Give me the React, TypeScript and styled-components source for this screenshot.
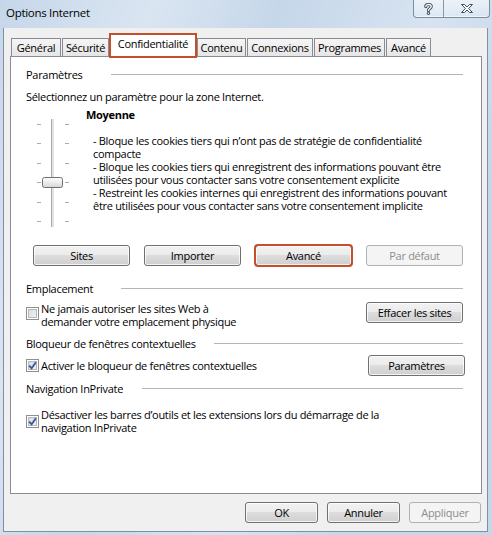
import React from 'react';
import styled, { createGlobalStyle } from 'styled-components';

const ORANGE = '#c4502b';

const GlobalStyle = createGlobalStyle`
  html, body {
    margin: 0;
    padding: 0;
  }
  body {
    font-family: "Open Sans", "Noto Sans", sans-serif;
    font-size: 11px;
    letter-spacing: -0.3px;
    color: #000;
  }
`;

const tabs = [
  { label: 'Général', w: 50 },
  { label: 'Sécurité', w: 47 },
  { label: 'Confidentialité', w: 88, active: true },
  { label: 'Contenu', w: 49 },
  { label: 'Connexions', w: 66 },
  { label: 'Programmes', w: 71 },
  { label: 'Avancé', w: 45 },
];

const HelpIcon = () => (
  <svg width="9" height="12" viewBox="0 0 9 12">
    <path d="M1.8 3.6 C1.8 0.8 7.2 0.8 7.2 3.6 C7.2 5.6 4.5 5.4 4.5 7.6" fill="none" stroke="#3d4b60" strokeWidth="3.2" strokeLinecap="round" />
    <circle cx="4.5" cy="10.3" r="1.6" fill="#3d4b60" />
    <path d="M1.8 3.6 C1.8 0.8 7.2 0.8 7.2 3.6 C7.2 5.6 4.5 5.4 4.5 7.6" fill="none" stroke="#fff" strokeWidth="1.3" strokeLinecap="round" />
    <circle cx="4.5" cy="10.3" r="0.7" fill="#fff" />
  </svg>
);

const CloseIcon = () => (
  <svg width="12" height="9" viewBox="0 0 12 9">
    <polygon points="0.5,0.5 3.5,0.5 6,3 8.5,0.5 11.5,0.5 7.6,4.5 11.5,8.5 8.5,8.5 6,6 3.5,8.5 0.5,8.5 4.4,4.5" fill="#fff" stroke="#3d4b60" strokeWidth="1" strokeLinejoin="round" />
  </svg>
);

const Check = () => (
  <svg width="9" height="9" viewBox="0 0 9 9">
    <path d="M1.2 4.6 L3.6 7.2 L7.9 1.3" fill="none" stroke="#3a5a9c" strokeWidth="1.9" />
  </svg>
);

const PrivacySlider = () => (
  <svg width="34" height="110" viewBox="0 0 34 110">
    <rect x="15" y="1" width="3" height="108" fill="#e3e3e3" />
    <line x1="15.5" y1="1" x2="15.5" y2="109" stroke="#a8a8a8" />
    {[6, 25, 45, 64, 84, 103].map((y) => (
      <g key={y} stroke="#acacac">
        <line x1="1" y1={y + 0.5} x2="5" y2={y + 0.5} />
        <line x1="29" y1={y + 0.5} x2="33" y2={y + 0.5} />
      </g>
    ))}
    <defs>
      <linearGradient id="thumb" x1="0" y1="0" x2="0" y2="1">
        <stop offset="0" stopColor="#fdfdfd" />
        <stop offset="0.5" stopColor="#ececec" />
        <stop offset="1" stopColor="#d4d4d4" />
      </linearGradient>
    </defs>
    <rect x="6.5" y="59.5" width="20" height="10" rx="2" fill="url(#thumb)" stroke="#707070" />
  </svg>
);

const App: React.FC = () => (
  <>
    <GlobalStyle />
    <Window>
      <TitleBar>
        <Title>Options Internet</Title>
        <CaptionGroup>
          <CaptionButton $w={29}>
            <HelpIcon />
          </CaptionButton>
          <CaptionButton $w={45} $divider>
            <CloseIcon />
          </CaptionButton>
        </CaptionGroup>
      </TitleBar>

      <Client>
        <TabStrip>
          {tabs.map((t) => (
            <Tab key={t.label} $w={t.w} $active={t.active}>
              {t.label}
            </Tab>
          ))}
        </TabStrip>

        <Panel>
          <GroupHeader $gap={28}>Paramètres</GroupHeader>
          <Intro>Sélectionnez un paramètre pour la zone Internet.</Intro>

          <SliderRow>
            <SliderBox>
              <PrivacySlider />
            </SliderBox>
            <LevelText>
              <LevelName>Moyenne</LevelName>
              <LevelDesc>
                <Line>- Bloque les cookies tiers qui n’ont pas de stratégie de confidentialité</Line>
                <Line>compacte</Line>
                <Line>- Bloque les cookies tiers qui enregistrent des informations pouvant être</Line>
                <Line>utilisées pour vous contacter sans votre consentement explicite</Line>
                <Line>- Restreint les cookies internes qui enregistrent des informations pouvant</Line>
                <Line>être utilisées pour vous contacter sans votre consentement implicite</Line>
              </LevelDesc>
            </LevelText>
          </SliderRow>

          <ButtonRow>
            <Button>Sites</Button>
            <Button>Importer</Button>
            <Button $highlight>Avancé</Button>
            <Button disabled>Par défaut</Button>
          </ButtonRow>

          <GroupHeader $gap={28} $top={16}>Emplacement</GroupHeader>
          <OptionRow $top={7}>
            <CheckBox $top={5} />
            <OptionLabel>
              <Line>Ne jamais autoriser les sites Web à</Line>
              <Line>demander votre emplacement physique</Line>
            </OptionLabel>
            <Button>Effacer les sites</Button>
          </OptionRow>

          <GroupHeader $gap={18} $top={9}>Bloqueur de fenêtres contextuelles</GroupHeader>
          <OptionRow $top={5} $center>
            <CheckBox $checked>
              <Check />
            </CheckBox>
            <OptionLabel>Activer le bloqueur de fenêtres contextuelles</OptionLabel>
            <Button $nudge={-2}>Paramètres</Button>
          </OptionRow>

          <GroupHeader $gap={19} $top={6}>Navigation InPrivate</GroupHeader>
          <OptionRow $top={13}>
            <CheckBox $checked $top={7}>
              <Check />
            </CheckBox>
            <OptionLabel>
              <Line>Désactiver les barres d’outils et les extensions lors du démarrage de la</Line>
              <Line>navigation InPrivate</Line>
            </OptionLabel>
          </OptionRow>
        </Panel>

        <Footer>
          <Button $w={73}>OK</Button>
          <Button $w={73}>Annuler</Button>
          <Button $w={72} disabled>
            Appliquer
          </Button>
        </Footer>
      </Client>
    </Window>
  </>
);

const Window = styled.div`
  width: 492px;
  height: 535px;
  display: flex;
  flex-direction: column;
  background:
    linear-gradient(112deg, rgba(255, 255, 255, 0) 0%, rgba(255, 255, 255, 0.35) 22%, rgba(255, 255, 255, 0) 40%,
      rgba(255, 255, 255, 0.3) 62%, rgba(255, 255, 255, 0) 80%),
    #c6d7ea;
  overflow: hidden;
`;

const TitleBar = styled.div`
  height: 28px;
  display: flex;
  align-items: flex-start;
  flex-shrink: 0;
`;

const Title = styled.div`
  padding: 5px 0 0 6px;
  font-size: 11.5px;
  line-height: 16px;
`;

const CaptionGroup = styled.div`
  margin-left: auto;
  margin-right: 2px;
  height: 17px;
  display: flex;
  border: 1px solid #7c8ca1;
  border-top: none;
  border-radius: 0 0 4px 4px;
  background: linear-gradient(rgba(255, 255, 255, 0.55), rgba(255, 255, 255, 0.2));
  box-shadow: inset 0 -1px 0 rgba(255, 255, 255, 0.6);
`;

const CaptionButton = styled.div<{ $w: number; $divider?: boolean }>`
  width: ${({ $w }) => $w}px;
  display: flex;
  align-items: center;
  justify-content: center;
  border-left: ${({ $divider }) => ($divider ? '1px solid #8797ab' : 'none')};
`;

const Client = styled.div`
  flex: 1;
  margin: 0 4px 3px 3px;
  border: 1px solid #7f8fa4;
  border-top: none;
  background: #f0f0f0;
  padding: 5px 5px 0 6px;
  display: flex;
  flex-direction: column;
  min-height: 0;
`;

const TabStrip = styled.div`
  display: flex;
  align-items: flex-end;
  gap: 1px;
  padding-left: 1px;
`;

const Tab = styled.div<{ $w: number; $active?: boolean }>`
  box-sizing: border-box;
  width: ${({ $w }) => $w}px;
  height: ${({ $active }) => ($active ? 25 : 18)}px;
  display: flex;
  align-items: center;
  justify-content: center;
  white-space: nowrap;
  line-height: 14px;
  border: 1px solid #898c95;
  border-bottom: none;
  background: linear-gradient(#f5f5f5, #e6e6e6);
  ${({ $active }) =>
    $active &&
    `
    position: relative;
    z-index: 1;
    margin: 0 -1px -2px -1px;
    padding-bottom: 3px;
    border: 2px solid ${ORANGE};
    background: #fff;
  `}
`;

const Panel = styled.div`
  flex: 1;
  border: 1px solid #898c95;
  background: #fff;
  padding: 11px 18px 0 15px;
  display: flex;
  flex-direction: column;
  line-height: 13px;
  white-space: nowrap;
`;

const GroupHeader = styled.div<{ $gap: number; $top?: number }>`
  display: flex;
  align-items: center;
  margin-top: ${({ $top }) => $top ?? 0}px;
  height: 13px;
  &::after {
    content: '';
    flex: 1;
    margin-left: ${({ $gap }) => $gap}px;
    border-top: 1px solid #b4b4b4;
  }
`;

const Intro = styled.div`
  margin-top: 9px;
`;

const SliderRow = styled.div`
  display: flex;
  margin-top: 5px;
`;

const SliderBox = styled.div`
  margin: 10px 0 0 10px;
  height: 110px;
`;

const LevelText = styled.div`
  margin-left: 16px;
`;

const LevelName = styled.div`
  font-weight: 700;
`;

const LevelDesc = styled.div`
  margin: 13px 0 0 7px;
`;

const Line = styled.div`
  height: 13px;
`;

const ButtonRow = styled.div`
  display: flex;
  gap: 14px;
  margin: 17px 0 0 7px;
`;

const Button = styled.button<{ $w?: number; $highlight?: boolean; $nudge?: number }>`
  box-sizing: border-box;
  width: ${({ $w }) => $w ?? 97}px;
  height: 21px;
  padding: 0;
  flex-shrink: 0;
  font: inherit;
  letter-spacing: inherit;
  line-height: 14px;
  color: #000;
  border: 1px solid #707070;
  border-radius: 3px;
  background: linear-gradient(#f2f2f2 0%, #ebebeb 50%, #dddddd 50%, #cfcfcf 100%);
  box-shadow: inset 0 0 0 1px rgba(255, 255, 255, 0.75);
  margin-right: ${({ $nudge }) => $nudge ?? 0}px;
  ${({ $highlight }) => $highlight && `outline: 2px solid ${ORANGE}; outline-offset: -1px;`}
  &:disabled {
    color: #8d8d8d;
    border-color: #adb2b5;
    background: #f4f4f4;
    box-shadow: none;
  }
`;

const OptionRow = styled.div<{ $top: number; $center?: boolean }>`
  display: flex;
  align-items: ${({ $center }) => ($center ? 'center' : 'flex-start')};
  margin-top: ${({ $top }) => $top}px;
  & > button {
    margin-left: auto;
  }
`;

const CheckBox = styled.span<{ $checked?: boolean; $top?: number }>`
  box-sizing: border-box;
  width: 13px;
  height: 13px;
  flex-shrink: 0;
  margin-top: ${({ $top }) => $top ?? 0}px;
  border: 1px solid #8e8f8f;
  padding: 1px;
  display: flex;
  align-items: center;
  justify-content: center;
  background: linear-gradient(135deg, #d6d9de, #f4f4f5);
  box-shadow: inset 0 0 0 1px #fff, inset 0 0 0 2px #b4b9bf;
`;

const OptionLabel = styled.div`
  margin-left: 2px;
`;

const Footer = styled.div`
  height: 37px;
  flex-shrink: 0;
  display: flex;
  align-items: center;
  justify-content: flex-end;
  gap: 9px;
  padding-right: 1px;
`;

export default App;
